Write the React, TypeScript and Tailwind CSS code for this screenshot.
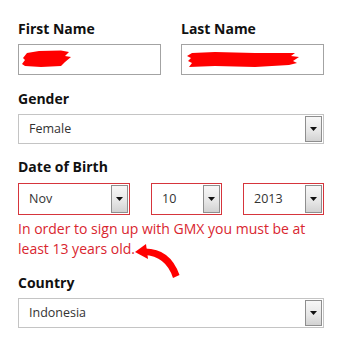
import type { ReactNode } from "react";

function DropButton() {
  return (
    <div className="flex h-full w-[17px] shrink-0 items-center justify-center border border-[#8e8e8e] bg-[linear-gradient(180deg,#f7f7f7_0%,#e6e6e6_60%,#d2d2d2_100%)]">
      <svg width="7" height="4" viewBox="0 0 7 4">
        <path d="M0 0h7L3.5 4z" fill="#111" />
      </svg>
    </div>
  );
}

function Select({
  value,
  className,
  error = false,
}: {
  value: string;
  className: string;
  error?: boolean;
}) {
  return (
    <div
      className={
        error
          ? `flex items-stretch border border-[#d6353c] bg-white p-px ${className}`
          : `flex items-stretch border border-[#c4c4c4] bg-white p-px ${className}`
      }
    >
      <span className="flex flex-1 items-center pl-[9px] text-[12.5px] text-[#333]">{value}</span>
      <DropButton />
    </div>
  );
}

function Label({ children, className = "" }: { children: ReactNode; className?: string }) {
  return <p className={`text-[14px] font-bold leading-[19px] text-[#111] ${className}`}>{children}</p>;
}

export default function App() {
  return (
    <main className="relative h-[340px] w-[345px] overflow-hidden bg-white pl-[18px] pt-[19px] font-['Open_Sans',sans-serif]">
      <div className="flex w-[306px] gap-[20px]">
        <div className="flex w-[143px] flex-col">
          <Label>First Name</Label>
          <div className="mt-[6px] flex h-[31px] items-center border border-[#a3a3a3] bg-white">
            <svg width="60" height="20" viewBox="0 0 60 20" className="ml-[2px]">
              <path
                d="M6 3 L18 1 L40 0.5 L48 2 L44 6 L50 7 L44 12 L40 16 L20 17 L4 16 L1 14 L4 10 L2 8 Z"
                fill="#ff0000"
              />
            </svg>
          </div>
        </div>
        <div className="flex w-[143px] flex-col">
          <Label>Last Name</Label>
          <div className="mt-[6px] flex h-[31px] items-center border border-[#a3a3a3] bg-white">
            <svg width="120" height="20" viewBox="0 0 120 20" className="ml-[3px]">
              <path
                d="M7 3 L30 2 L70 3 L110 3 L106 6 L114 7 L108 11 L112 13 L104 15 L70 17 L30 16 L4 17 L7 13 L3 11 L6 8 L2 6 Z"
                fill="#ff0000"
              />
            </svg>
          </div>
        </div>
      </div>

      <Label className="mt-[14px]">Gender</Label>
      <Select value="Female" className="mt-[6px] h-[30px] w-[306px]" />

      <Label className="mt-[13px]">Date of Birth</Label>
      <div className="mt-[7px] flex w-[306px] justify-between">
        <Select value="Nov" error className="h-[32px] w-[112px]" />
        <Select value="10" error className="h-[32px] w-[71px]" />
        <Select value="2013" error className="h-[32px] w-[81px]" />
      </div>
      <p className="mt-[4px] w-[306px] text-[14px] leading-[19.5px] text-[#d9262f]">
        In order to sign up with GMX you must be at least 13 years old.
      </p>

      <Label className="mt-[15px]">Country</Label>
      <Select value="Indonesia" className="mt-[6px] h-[30px] w-[306px]" />

      <svg
        width="55"
        height="45"
        viewBox="0 0 55 45"
        className="absolute left-[130px] top-[240px]"
      >
        <path d="M5 12 L16 4 L18 19 Z" fill="#ff0000" />
        <path d="M14 8.5 Q40 8 49.5 35 L43 38 Q36 16 14 15 Z" fill="#ff0000" />
      </svg>
    </main>
  );
}
